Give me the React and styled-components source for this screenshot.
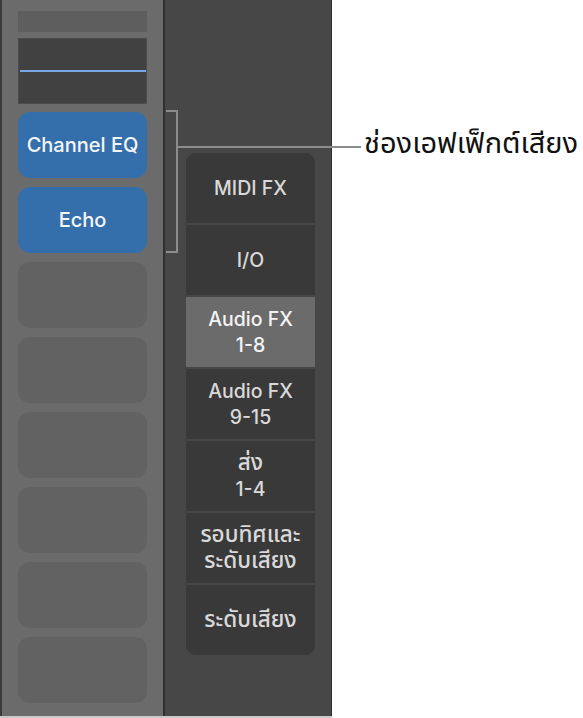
import React from "react";
import styled, { createGlobalStyle } from "styled-components";

const Global = createGlobalStyle`
  html, body { margin: 0; padding: 0; background: #ffffff; }
  body { font-family: "Inter", "Noto Sans Thai", "Noto Sans", sans-serif; }
`;

const Page = styled.div`
  position: relative;
  width: 583px;
  height: 718px;
  overflow: hidden;
  display: flex;
  background: #ffffff;
`;

const Screen = styled.div`
  display: flex;
  height: 716px;
  border-bottom: 2px solid #c9c9c9;
`;

const LeftStrip = styled.div`
  box-sizing: border-box;
  width: 165px;
  height: 100%;
  background: #6b6b6b;
  border-left: 2px solid #3b3b3b;
  border-right: 2px solid #2f2f2f;
  padding: 11px 0 0 16px;
  display: flex;
  flex-direction: column;
`;

const TopBar = styled.div`
  width: 129px;
  height: 21px;
  background: #5e5e5e;
`;

const Display = styled.div`
  box-sizing: border-box;
  width: 129px;
  height: 66px;
  margin-top: 6px;
  background: #414141;
  border: 1px solid #4c4c4c;
  display: flex;
  align-items: center;
  justify-content: center;
`;

const DisplayLine = styled.div`
  width: 126px;
  height: 2px;
  background: #7aa6e2;
`;

const Slots = styled.div`
  margin-top: 8px;
  display: flex;
  flex-direction: column;
  gap: 9px;
`;

const Slot = styled.div`
  width: 129px;
  height: 66px;
  border-radius: 12px;
  background: ${(p) => (p.$active ? "#346fab" : "#626262")};
  color: #f4f6fa;
  font-size: 20px;
  font-weight: 500;
  display: flex;
  align-items: center;
  justify-content: center;
`;

const RightPanel = styled.div`
  box-sizing: border-box;
  width: 167px;
  height: 100%;
  background: #474747;
  border-right: 1px solid #2f2f2f;
  padding: 153px 0 0 21px;
`;

const Menu = styled.div`
  width: 129px;
  background: #393939;
  border-radius: 10px;
  overflow: hidden;
  display: flex;
  flex-direction: column;
`;

const Item = styled.div`
  box-sizing: border-box;
  height: ${(p) => (p.$first ? "70px" : "72px")};
  border-top: ${(p) => (p.$first ? "none" : "2px solid #474747")};
  background: ${(p) => (p.$selected ? "#6b6b6b" : "#393939")};
  background-clip: padding-box;
  color: ${(p) => (p.$selected ? "#f4f4f4" : "#d9d9d9")};
  font-size: 19.5px;
  font-weight: 500;
  line-height: 26px;
  text-align: center;
  display: flex;
  flex-direction: column;
  align-items: center;
  justify-content: center;
`;

const Line = styled.span`
  font-size: ${(p) => (p.$thai ? "22.5px" : "inherit")};
  font-family: ${(p) =>
    p.$thai ? '"Noto Sans Thai", "Noto Sans", sans-serif' : "inherit"};
  line-height: 26px;
  white-space: nowrap;
`;

const Callout = styled.div`
  position: absolute;
  left: 166px;
  top: 110px;
  display: flex;
  align-items: flex-start;
`;

const Bracket = styled.div`
  box-sizing: border-box;
  width: 12px;
  height: 143px;
  border: 2px solid #8c8c8c;
  border-left: none;
`;

const Leader = styled.div`
  width: 183px;
  height: 2px;
  margin-top: 36px;
  background: #8c8c8c;
`;

const CalloutText = styled.div`
  margin-left: 3px;
  margin-top: 14px;
  font-family: "Noto Sans Thai", "Noto Sans", sans-serif;
  font-size: 29px;
  font-weight: 400;
  line-height: 40px;
  color: #111111;
  white-space: nowrap;
`;

const isThai = (s) => /[\u0E00-\u0E7F]/.test(s);

const items = [
  ["MIDI FX"],
  ["I/O"],
  ["Audio FX", "1-8"],
  ["Audio FX", "9-15"],
  ["ส่ง", "1-4"],
  ["รอบทิศและ", "ระดับเสียง"],
  ["ระดับเสียง"],
];

export default function App() {
  return (
    <Page>
      <Global />
      <Screen>
        <LeftStrip>
          <TopBar />
          <Display>
            <DisplayLine />
          </Display>
          <Slots>
            <Slot $active>Channel EQ</Slot>
            <Slot $active>Echo</Slot>
            {[0, 1, 2, 3, 4, 5].map((i) => (
              <Slot key={i} />
            ))}
          </Slots>
        </LeftStrip>
        <RightPanel>
          <Menu>
            {items.map((lines, i) => (
              <Item key={i} $first={i === 0} $selected={i === 2}>
                {lines.map((l) => (
                  <Line key={l} $thai={isThai(l)}>
                    {l}
                  </Line>
                ))}
              </Item>
            ))}
          </Menu>
        </RightPanel>
      </Screen>
      <Callout>
        <Bracket />
        <Leader />
        <CalloutText>ช่องเอฟเฟ็กต์เสียง</CalloutText>
      </Callout>
    </Page>
  );
}
